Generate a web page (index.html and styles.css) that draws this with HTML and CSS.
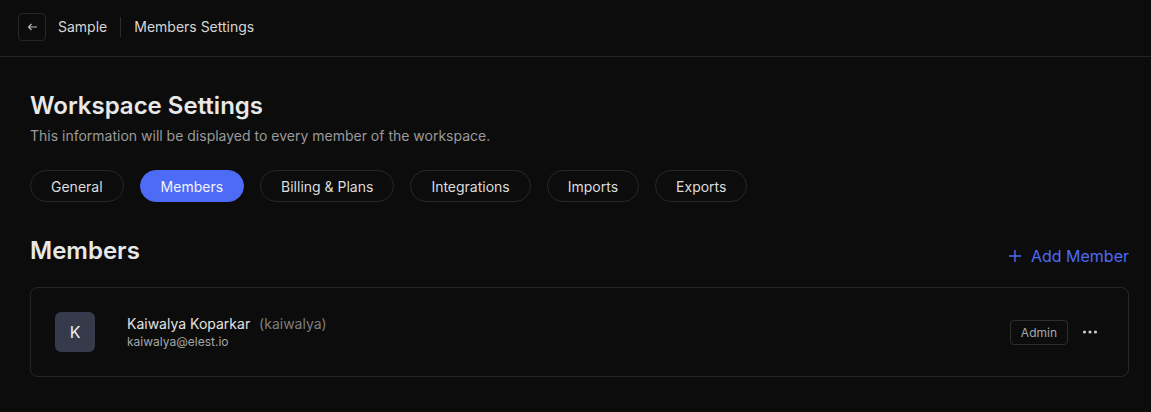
FILE: index.html
```html
<!DOCTYPE html>
<html lang="en">

<head>
    <meta charset="UTF-8">
    <meta name="viewport" content="width=device-width, initial-scale=1.0">
    <title>Members Settings</title>
    <link rel="stylesheet" href="styles.css">
</head>

<body>
    <div class="topbar">
        <button class="back_btn">
            <svg width="11" height="10" viewBox="0 0 11 10" fill="none" stroke="#bdbdbd" stroke-width="1.1">
                <path d="M10 5H1.5M4.5 2L1.5 5l3 3" />
            </svg>
        </button>
        <span class="crumb">Sample</span>
        <span class="crumb_sep"></span>
        <span class="crumb">Members Settings</span>
    </div>

    <div class="content">
        <h1 class="title">Workspace Settings</h1>
        <p class="subtitle">This information will be displayed to every member of the workspace.</p>

        <div class="tabs">
            <a class="tab">General</a>
            <a class="tab active">Members</a>
            <a class="tab">Billing &amp; Plans</a>
            <a class="tab">Integrations</a>
            <a class="tab">Imports</a>
            <a class="tab">Exports</a>
        </div>

        <div class="section_head">
            <h2 class="section_title">Members</h2>
            <a class="add_btn">
                <svg width="14" height="14" viewBox="0 0 14 14" fill="none" stroke="#4d6bf5" stroke-width="1.4">
                    <path d="M7 1v12M1 7h12" />
                </svg>
                Add Member
            </a>
        </div>

        <div class="member_list">
            <div class="member">
                <div class="avatar">K</div>
                <div class="member_info">
                    <div class="member_name">Kaiwalya Koparkar <span class="handle">(kaiwalya)</span></div>
                    <div class="member_email">kaiwalya@elest.io</div>
                </div>
                <span class="role">Admin</span>
                <span class="more">
                    <svg width="16" height="4" viewBox="0 0 16 4" fill="#c8c8c8">
                        <circle cx="2.5" cy="2" r="1.6" />
                        <circle cx="8" cy="2" r="1.6" />
                        <circle cx="13.5" cy="2" r="1.6" />
                    </svg>
                </span>
            </div>
        </div>
    </div>
</body>

</html>
```

FILE: styles.css
```css
body {
    margin: 0;
    background-color: #0c0c0c;
    color: #e6e6e6;
    font-family: Inter, "Noto Sans", sans-serif;
}

a {
    text-decoration: none;
}

.topbar {
    display: flex;
    align-items: center;
    height: 57px;
    padding: 0 18px;
    border-bottom: 1px solid #232323;
    box-sizing: border-box;
}

.back_btn {
    display: flex;
    align-items: center;
    justify-content: center;
    width: 28px;
    height: 28px;
    padding: 0;
    margin-top: -3px;
    border: 1px solid #262626;
    border-radius: 4px;
    background-color: transparent;
}

.crumb {
    font-size: 14px;
    color: #d6d6d6;
    margin-top: -3px;
}

.back_btn + .crumb {
    margin-left: 12px;
}

.crumb_sep {
    width: 1px;
    height: 20px;
    background-color: #2c2c2c;
    margin: -3px 13px 0;
}

.content {
    padding: 0 22px 0 30px;
}

.title {
    margin: 34px 0 0;
    font-size: 24px;
    font-weight: 600;
    line-height: 30px;
    color: #e8e8e8;
}

.subtitle {
    margin: 5px 0 0;
    font-size: 14px;
    line-height: 20px;
    color: #9a9a9a;
}

.tabs {
    display: flex;
    gap: 16px;
    margin-top: 24px;
}

.tab {
    height: 32px;
    padding: 0 20px;
    display: flex;
    align-items: center;
    border: 1px solid #272727;
    border-radius: 16px;
    box-sizing: border-box;
    font-size: 14px;
    color: #dcdcdc;
}

.tab.active {
    background-color: #4d6bf5;
    border-color: #4d6bf5;
    color: #f2f4ff;
}

.section_head {
    display: flex;
    align-items: center;
    justify-content: space-between;
    margin-top: 34px;
}

.section_title {
    margin: 0;
    font-size: 24px;
    font-weight: 600;
    line-height: 30px;
    color: #e8e8e8;
}

.add_btn {
    display: flex;
    align-items: center;
    gap: 9px;
    margin-top: 10px;
    font-size: 16px;
    color: #4d6bf5;
}

.member_list {
    margin-top: 21px;
    border: 1px solid #262626;
    border-radius: 8px;
}

.member {
    display: flex;
    align-items: center;
    height: 88px;
    padding: 0 30px 0 24px;
}

.avatar {
    width: 40px;
    height: 40px;
    border-radius: 6px;
    background-color: #353b4b;
    display: flex;
    align-items: center;
    justify-content: center;
    font-size: 16px;
    color: #f0f0f0;
}

.member_info {
    margin-left: 32px;
    flex: 1;
}

.member_name {
    font-size: 14px;
    line-height: 20px;
    color: #e2e2e2;
}

.handle {
    color: #7d7d7d;
    margin-left: 5px;
}

.member_email {
    font-size: 12px;
    line-height: 16px;
    color: #a6a6a6;
}

.role {
    height: 25px;
    padding: 0 10px;
    display: flex;
    align-items: center;
    border: 1px solid #2e2e2e;
    border-radius: 4px;
    font-size: 12px;
    color: #a8a8a8;
    box-sizing: border-box;
}

.more {
    display: flex;
    margin-left: 14px;
}
```
